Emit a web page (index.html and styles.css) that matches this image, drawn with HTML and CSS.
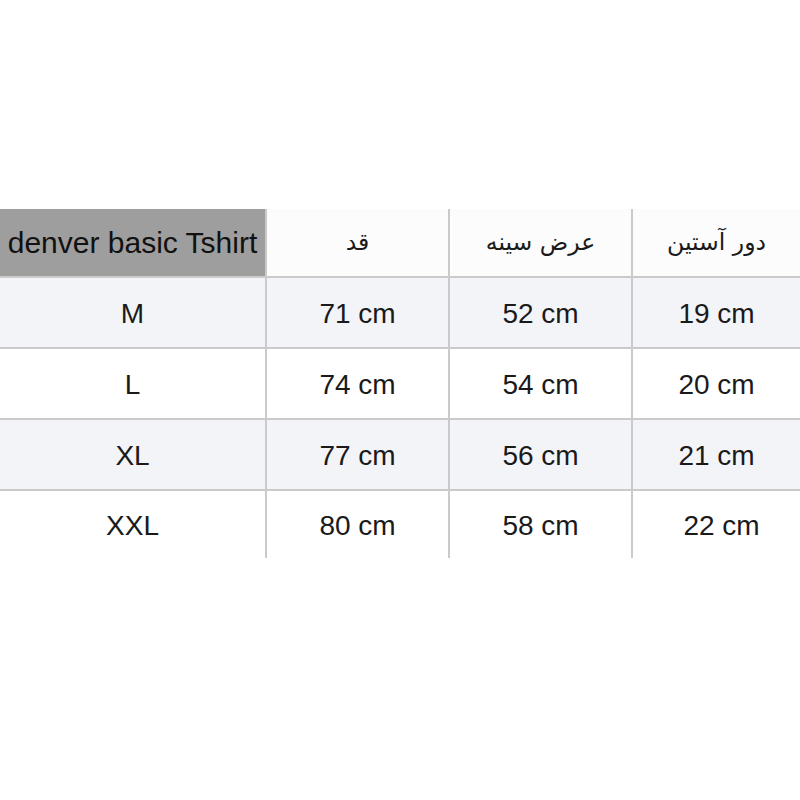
FILE: index.html
```html
<!DOCTYPE html>
<html lang="fa">
<head>
<meta charset="utf-8">
<title>denver basic Tshirt</title>
<link rel="stylesheet" href="styles.css">
</head>
<body>
<div class="page">
  <div class="size-table">
    <div class="row head">
      <div class="cell title">denver basic Tshirt</div>
      <div class="cell fa">قد</div>
      <div class="cell fa">عرض سینه</div>
      <div class="cell fa">دور آستین</div>
    </div>
    <div class="row stripe">
      <div class="cell first">M</div>
      <div class="cell">71 cm</div>
      <div class="cell">52 cm</div>
      <div class="cell">19 cm</div>
    </div>
    <div class="row">
      <div class="cell first">L</div>
      <div class="cell">74 cm</div>
      <div class="cell">54 cm</div>
      <div class="cell">20 cm</div>
    </div>
    <div class="row stripe">
      <div class="cell first">XL</div>
      <div class="cell">77 cm</div>
      <div class="cell">56 cm</div>
      <div class="cell">21 cm</div>
    </div>
    <div class="row last">
      <div class="cell first">XXL</div>
      <div class="cell">80 cm</div>
      <div class="cell">58 cm</div>
      <div class="cell shifted">22 cm</div>
    </div>
  </div>
</div>
</body>
</html>
```

FILE: styles.css
```css
html, body {
  margin: 0;
  padding: 0;
  background: #ffffff;
}

.page {
  width: 800px;
  height: 800px;
  padding-top: 209px;
  box-sizing: border-box;
  font-family: "Liberation Sans", "DejaVu Sans", Arial, sans-serif;
  color: #1a1a1a;
}

.size-table {
  display: flex;
  flex-direction: column;
}

.row {
  display: grid;
  grid-template-columns: 265px 183px 183px 169px;
  height: 71px;
  border-top: 2px solid #cacaca;
  box-sizing: border-box;
  background: #ffffff;
}

.row.head {
  height: 67px;
  border-top: none;
  background: #fcfcfc;
}

.row.stripe {
  background: #f3f4f8;
}

.row.last {
  height: 69px;
}

.cell {
  display: flex;
  align-items: center;
  justify-content: center;
  font-size: 28px;
  border-left: 2px solid #cacaca;
  padding-top: 2px;
}

.cell.first,
.cell.title {
  border-left: none;
}

.cell.title {
  background: #9e9e9e;
  color: #111111;
  border-right: 1px solid #a8a8a8;
  margin-right: -1px;
  font-size: 30px;
  padding-top: 0;
}

.cell.fa {
  font-family: "DejaVu Sans", sans-serif;
  font-size: 23.5px;
  direction: rtl;
  padding-top: 0;
  padding-bottom: 2px;
}

.cell.shifted {
  padding-left: 10px;
}
```
